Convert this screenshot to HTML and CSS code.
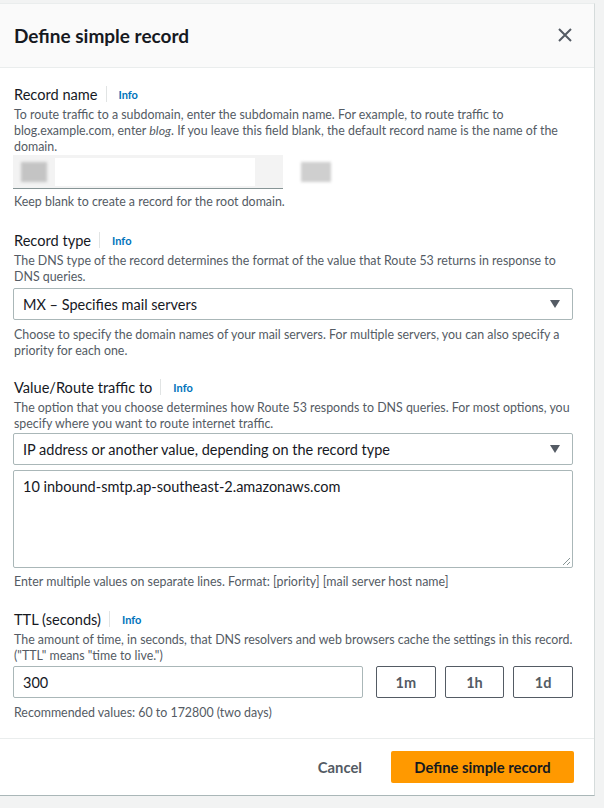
FILE: index.html
```html
<!DOCTYPE html>
<html>
<head>
<meta charset="utf-8">
<link rel="stylesheet" href="styles.css">
</head>
<body>
<div class="modal">
  <div class="modal-header">
    <h2 class="title">Define simple record</h2>
    <svg class="close" width="14" height="14" viewBox="0 0 14 14"><path d="M1 1L13 13M13 1L1 13" stroke="#545b64" stroke-width="2" fill="none"/></svg>
  </div>
  <div class="modal-body">
    <div class="field first">
      <div class="label-row"><span class="label">Record name</span><span class="sep"></span><span class="info">Info</span></div>
      <p class="desc">To route traffic to a subdomain, enter the subdomain name. For example, to route traffic to blog.example.com, enter <span class="em">blog</span>. If you leave this field blank, the default record name is the name of the domain.</p>
      <div class="name-row">
        <div class="name-input">
          <span class="blur-block b1"></span>
          <span class="blur-white"></span>
        </div>
        <div class="suffix"><span class="blur-block b2"></span></div>
      </div>
      <p class="hint tight">Keep blank to create a record for the root domain.</p>
    </div>

    <div class="field">
      <div class="label-row"><span class="label">Record type</span><span class="sep"></span><span class="info">Info</span></div>
      <p class="desc">The DNS type of the record determines the format of the value that Route 53 returns in response to DNS queries.</p>
      <div class="select"><span>MX – Specifies mail servers</span><span class="caret"></span></div>
      <p class="hint">Choose to specify the domain names of your mail servers. For multiple servers, you can also specify a priority for each one.</p>
    </div>

    <div class="field value-field">
      <div class="label-row"><span class="label">Value/Route traffic to</span><span class="sep"></span><span class="info">Info</span></div>
      <p class="desc">The option that you choose determines how Route 53 responds to DNS queries. For most options, you specify where you want to route internet traffic.</p>
      <div class="select"><span>IP address or another value, depending on the record type</span><span class="caret"></span></div>
      <div class="textarea">10 inbound-smtp.ap-southeast-2.amazonaws.com
        <svg class="grip" width="9" height="9" viewBox="0 0 9 9"><path d="M8 1L1 8M8 5L5 8" stroke="#879596" stroke-width="1" fill="none"/></svg>
      </div>
      <p class="hint">Enter multiple values on separate lines. Format: [priority] [mail server host name]</p>
    </div>

    <div class="field">
      <div class="label-row"><span class="label">TTL (seconds)</span><span class="sep"></span><span class="info">Info</span></div>
      <p class="desc">The amount of time, in seconds, that DNS resolvers and web browsers cache the settings in this record. ("TTL" means "time to live.")</p>
      <div class="ttl-row">
        <div class="input">300</div>
        <div class="btn">1m</div>
        <div class="btn">1h</div>
        <div class="btn">1d</div>
      </div>
      <p class="hint">Recommended values: 60 to 172800 (two days)</p>
    </div>
  </div>
  <div class="modal-footer">
    <span class="cancel">Cancel</span>
    <span class="primary">Define simple record</span>
  </div>
</div>
</body>
</html>
```
FILE: styles.css
```css
* { box-sizing: border-box; }
body {
  margin: 0;
  background: #f2f3f3;
  font-family: Lato, "Open Sans", sans-serif;
  color: #16191f;
  height: 808px;
  overflow: hidden;
}
.modal {
  margin-top: 3px;
  width: 595px;
  height: 793px;
  background: #fff;
  border-right: 1px solid #d5dbdb;
  border-bottom: 1px solid #aab7b8;
  border-top: 1px solid #eaeded;
  display: flex;
  flex-direction: column;
}
.modal-header {
  height: 64px;
  background: #fafafa;
  border-bottom: 1px solid #eaeded;
  display: flex;
  align-items: center;
  justify-content: space-between;
  padding: 0 22px 1px 14px;
}
.title {
  margin: 0;
  font-size: 19px;
  font-weight: 700;
  color: #16191f;
}
.close { display: block; }
.modal-body {
  flex: 1;
  padding: 16px 21px 0 13px;
}
.field { margin-bottom: 18px; }
.field.first { margin-bottom: 20px; }
.field.value-field { margin-bottom: 19px; }
.field:last-child { margin-bottom: 0; }
.label-row {
  display: flex;
  align-items: center;
  height: 20px;
  padding-left: 1px;
}
.label { font-size: 14.6px; color: #16191f; }
.sep {
  width: 1px;
  height: 16px;
  background: #e1e4e4;
  margin: 0 12px 0 8px;
}
.info { font-size: 11px; font-weight: 700; color: #0073bb; }
.desc, .hint {
  margin: 0;
  font-size: 12.4px;
  line-height: 16px;
  color: #545b64;
  padding: 2px 0 0 1px;
  margin-right: -4px;
}
.em { font-style: italic; }
.desc { margin-top: 1px; }
.hint { margin-top: 5px; }
.hint.tight { margin-top: 3px; }
.value-field .hint { margin-top: 4px; }
.name-row {
  display: flex;
  align-items: center;
  height: 34px;
}
.name-input {
  width: 270px;
  height: 34px;
  background: #f3f3f3;
  border-bottom: 1px solid #879596;
  display: flex;
  align-items: center;
  padding-left: 8px;
  gap: 8px;
}
.blur-block {
  display: block;
  background: #c4c4c4;
  filter: blur(1.5px);
}
.b1 { width: 26px; height: 20px; }
.blur-white { display: block; width: 200px; height: 28px; background: #fff; }
.suffix { margin-left: 18px; }
.b2 { width: 30px; height: 20px; background: #cfcfcf; }
.select {
  margin-top: 3px;
  height: 32px;
  border: 1px solid #aab7b8;
  border-radius: 2px;
  display: flex;
  align-items: center;
  justify-content: space-between;
  padding: 0 12px 0 9px;
  font-size: 14.5px;
  color: #16191f;
}
.value-field .select { margin-top: 1px; }
.caret {
  width: 0; height: 0;
  border-left: 5.5px solid transparent;
  border-right: 5.5px solid transparent;
  border-top: 8px solid #545b64;
}
.textarea {
  position: relative;
  margin-top: 5px;
  height: 98px;
  border: 1px solid #aab7b8;
  border-radius: 2px;
  padding: 6px 9px;
  font-size: 14.5px;
  line-height: 20px;
  color: #16191f;
}
.grip { position: absolute; right: 1px; bottom: 1px; }
.ttl-row {
  margin-top: 2px;
  display: flex;
  gap: 9px;
}
.input {
  width: 350px;
  height: 32px;
  border: 1px solid #aab7b8;
  border-radius: 2px;
  display: flex;
  align-items: center;
  padding-left: 9px;
  font-size: 14.5px;
  margin-right: 4px;
}
.btn {
  flex: 1;
  height: 32px;
  border: 1px solid #545b64;
  border-radius: 2px;
  display: flex;
  align-items: center;
  justify-content: center;
  font-size: 14.5px;
  font-weight: 700;
  color: #545b64;
}
.modal-footer {
  height: 57px;
  border-top: 1px solid #eaeded;
  display: flex;
  align-items: center;
  justify-content: flex-end;
  padding: 0 20px 0 0;
}
.cancel {
  font-size: 14.8px;
  font-weight: 700;
  color: #545b64;
  margin-right: 29px;
}
.primary {
  width: 183px;
  height: 32px;
  background: #ff9900;
  border-radius: 2px;
  display: flex;
  align-items: center;
  justify-content: center;
  font-size: 14.8px;
  font-weight: 700;
  color: #16191f;
}
```
